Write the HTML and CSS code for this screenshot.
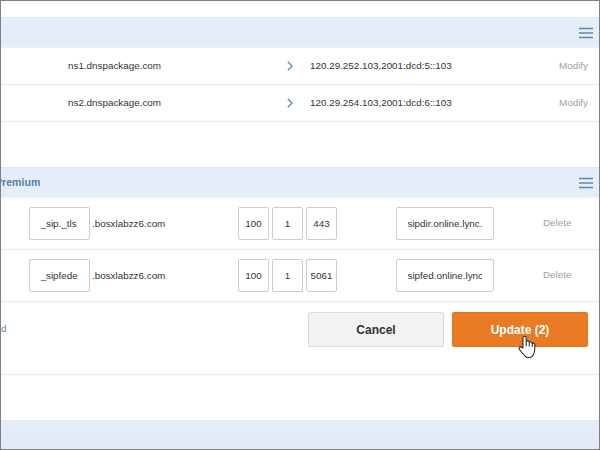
FILE: index.html
```html
<!DOCTYPE html>
<html lang="en">
<head>
<meta charset="utf-8">
<title>DNS records</title>
<link rel="stylesheet" href="styles.css">
</head>
<body>
<main class="frame">
  <section class="panel">
    <header class="band"><span></span>
      <svg class="menu" viewBox="0 0 14 12"><path d="M0 1.5h14M0 6h14M0 10.5h14"/></svg>
    </header>
    <div class="row server">
      <span class="host">ns1.dnspackage.com</span>
      <svg class="chevron" viewBox="0 0 6 10"><path d="M.8.8 5 5 .8 9.2"/></svg>
      <span>120.29.252.103,2001:dcd:5::103</span>
      <a class="action">Modify</a>
    </div>
    <div class="row server">
      <span class="host">ns2.dnspackage.com</span>
      <svg class="chevron" viewBox="0 0 6 10"><path d="M.8.8 5 5 .8 9.2"/></svg>
      <span>120.29.254.103,2001:dcd:6::103</span>
      <a class="action">Modify</a>
    </div>
  </section>
  <section class="panel">
    <header class="band"><h2 class="title">Premium</h2>
      <svg class="menu" viewBox="0 0 14 12"><path d="M0 1.5h14M0 6h14M0 10.5h14"/></svg>
    </header>
    <div class="row record">
      <div class="name"><span class="field service"><span class="value">_sip._tls</span></span><span>.bosxlabzz6.com</span></div>
      <div class="numbers"><span class="field">100</span><span class="field">1</span><span class="field">443</span></div>
      <span class="field target"><span class="value">sipdir.online.lync.</span></span>
      <a class="action">Delete</a>
    </div>
    <div class="row record">
      <div class="name"><span class="field service"><span class="value">_sipfede</span></span><span>.bosxlabzz6.com</span></div>
      <div class="numbers"><span class="field">100</span><span class="field">1</span><span class="field">5061</span></div>
      <span class="field target"><span class="value">sipfed.online.lync</span></span>
      <a class="action">Delete</a>
    </div>
    <div class="row footer">
      <a class="add">d</a>
      <div class="buttons">
        <button class="button">Cancel</button>
        <button class="button primary">Update (2)</button>
      </div>
    </div>
  </section>
  <section class="panel"><header class="band last"></header></section>
  <svg class="pointer" viewBox="0 0 19 25"><path d="M5.2 13.5V3.1C5.2.6 8.7.6 8.7 3.1V6.6C9.5 5.8 11.6 6 11.9 7.4 12.9 6.7 14.8 7 15 8.4 16.2 7.8 17.7 8.6 17.7 10.2V15.5C17.7 18 16.3 19.5 16 21.3 14.6 24.2 9.4 24.3 7.2 21.8 5.3 19.6 2.6 17.2 1.1 14.4.5 12.8 2.6 12 3.6 12.7Z"/><path d="M8.7 6.6v5M11.9 7.4v4.6M15 8.4v4"/></svg>
</main>
</body>
</html>
```
FILE: styles.css
```css
* { box-sizing: border-box; }

body {
  margin: 0;
  font: 9.85px/12px "Liberation Sans", Arial, sans-serif;
  color: #333;
  background: #fff;
}

.frame {
  position: relative;
  width: 600px;
  height: 450px;
  border: 1px solid #808080;
  padding-top: 16px;
  overflow: hidden;
  display: flex;
  flex-direction: column;
  gap: 45px;
}

.panel { flex: none; }

.band {
  display: flex;
  align-items: center;
  justify-content: space-between;
  height: 31px;
  padding-right: 6px;
  background: #e5edf8;
  border-top: 1px solid #dfe9f3;
  border-bottom: 1px solid #edf3fa;
}

.band.last {
  height: 29px;
  background: linear-gradient(#e5edf8, #e2e9f5);
  border-bottom: 0;
}

.title {
  margin: -2px 0 0 -6px;
  font-size: 10.6px;
  color: #5580a8;
}

.menu {
  width: 14px;
  height: 12px;
  margin-top: 1px;
  fill: none;
  stroke: #5f86ae;
  stroke-width: 1.6;
}

.row {
  display: grid;
  align-items: center;
  border-bottom: 1px dotted #d9d9d9;
}

.server {
  grid-template-columns: 219px 23px 1fr auto;
  height: 37px;
  padding: 0 11px 0 67px;
}

.chevron {
  width: 6px;
  height: 10px;
  fill: none;
  stroke: #5e88b4;
  stroke-width: 1.3;
}

.action { color: #a0a0a0; }

.record {
  grid-template-columns: 209px 158px 147px auto;
  height: 52px;
  padding-left: 28px;
}

.record .action { margin-top: -1px; }

.name, .numbers {
  display: flex;
  align-items: center;
  gap: 3px;
}

.name { gap: 2px; }

.field {
  display: flex;
  align-items: center;
  justify-content: center;
  width: 31px;
  height: 33px;
  border: 1px solid #ccc;
  border-radius: 2px;
  background: #fff;
}

.service {
  width: 61px;
  padding: 0 11px 0 10.5px;
  justify-content: flex-start;
}

.target {
  width: 98px;
  padding: 0 11px 0 10.5px;
}

.value {
  width: 100%;
  overflow: hidden;
  white-space: nowrap;
}

.footer {
  grid-template-columns: auto auto;
  justify-content: space-between;
  align-items: start;
  height: 73px;
  padding: 10px 11px 0 0;
}

.add {
  margin-top: 11px;
  color: #5e88b0;
}

.buttons { display: flex; gap: 8px; }

.button {
  width: 136px;
  height: 35px;
  padding: 0;
  border: 1px solid #ddd;
  border-radius: 2px;
  background: #f2f2f2;
  color: #333;
  font: bold 12px/14px "Liberation Sans", Arial, sans-serif;
}

.primary {
  border-color: #e27420;
  background: #e87b24;
  color: #fff;
}

.pointer {
  position: absolute;
  left: 517px;
  top: 334px;
  width: 18px;
  height: 24px;
  fill: #fff;
  stroke: #222;
  stroke-width: 1.1;
  stroke-linejoin: round;
}
```
